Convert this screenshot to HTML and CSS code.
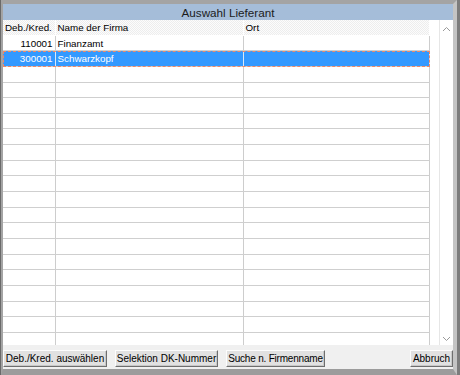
FILE: index.html
```html
<!DOCTYPE html>
<html lang="de">
<head>
    <meta charset="UTF-8">
    <title>Auswahl Lieferant</title>
    <link rel="stylesheet" href="styles.css">
</head>
<body>
    <div class="frame">
        <div class="window">
            <div class="title">Auswahl Lieferant</div>
            <div class="list">
                <div class="grid">
                    <div class="row head">
                        <div class="cell">Deb./Kred.</div>
                        <div class="cell">Name der Firma</div>
                        <div class="cell">Ort</div>
                    </div>
                    <div class="row">
                        <div class="cell num">110001</div>
                        <div class="cell">Finanzamt</div>
                        <div class="cell"></div>
                    </div>
                    <div class="row selected">
                        <div class="cell num">300001</div>
                        <div class="cell">Schwarzkopf</div>
                        <div class="cell"></div>
                    </div>
                    <div class="row"><div class="cell"></div><div class="cell"></div><div class="cell"></div></div>
                    <div class="row"><div class="cell"></div><div class="cell"></div><div class="cell"></div></div>
                    <div class="row"><div class="cell"></div><div class="cell"></div><div class="cell"></div></div>
                    <div class="row"><div class="cell"></div><div class="cell"></div><div class="cell"></div></div>
                    <div class="row"><div class="cell"></div><div class="cell"></div><div class="cell"></div></div>
                    <div class="row"><div class="cell"></div><div class="cell"></div><div class="cell"></div></div>
                    <div class="row"><div class="cell"></div><div class="cell"></div><div class="cell"></div></div>
                    <div class="row"><div class="cell"></div><div class="cell"></div><div class="cell"></div></div>
                    <div class="row"><div class="cell"></div><div class="cell"></div><div class="cell"></div></div>
                    <div class="row"><div class="cell"></div><div class="cell"></div><div class="cell"></div></div>
                    <div class="row"><div class="cell"></div><div class="cell"></div><div class="cell"></div></div>
                    <div class="row"><div class="cell"></div><div class="cell"></div><div class="cell"></div></div>
                    <div class="row"><div class="cell"></div><div class="cell"></div><div class="cell"></div></div>
                    <div class="row"><div class="cell"></div><div class="cell"></div><div class="cell"></div></div>
                    <div class="row"><div class="cell"></div><div class="cell"></div><div class="cell"></div></div>
                    <div class="row"><div class="cell"></div><div class="cell"></div><div class="cell"></div></div>
                    <div class="row"><div class="cell"></div><div class="cell"></div><div class="cell"></div></div>
                    <div class="row"><div class="cell"></div><div class="cell"></div><div class="cell"></div></div>
                    <div class="row"><div class="cell"></div><div class="cell"></div><div class="cell"></div></div>
                </div>
                <div class="scrollbar">
                    <svg width="9" height="6" viewBox="0 0 9 6"><polyline points="1,5 4.5,1.5 8,5" fill="none" stroke="#9a9a9a" stroke-width="1"/></svg>
                    <svg width="9" height="6" viewBox="0 0 9 6"><polyline points="1,1 4.5,4.5 8,1" fill="none" stroke="#9a9a9a" stroke-width="1"/></svg>
                </div>
            </div>
            <div class="buttons">
                <button class="btn b1">Deb./Kred. auswählen</button>
                <button class="btn b2">Selektion DK-Nummer</button>
                <button class="btn b3">Suche n. Firmenname</button>
                <button class="btn last">Abbruch</button>
            </div>
        </div>
    </div>
</body>
</html>
```
FILE: styles.css
```css
body {
    margin: 0;
    padding: 0;
    background-color: #9c9c9c;
    font-family: "Liberation Sans", Arial, sans-serif;
}
.frame {
    width: 460px;
    height: 375px;
    box-sizing: border-box;
    border-left: 1px solid #6a6a6a;
    border-right: 3px solid #7c7c7c;
}
.window {
    height: 100%;
    box-sizing: border-box;
    border-style: solid;
    border-width: 4px 4px 6px 2px;
    border-color: #a4a4a4 #c4c4c4 #9c9c9c #a4a4a4;
    background-color: #f0f0f0;
    display: flex;
    flex-direction: column;
}
.title {
    height: 16px;
    line-height: 17px;
    background-color: #a5bdd9;
    color: #1c1c1c;
    font-size: 11.7px;
    text-align: center;
}
.list {
    height: 325px;
    background: #fff;
    display: flex;
    overflow: hidden;
}
.grid {
    width: 427px;
    flex: none;
}
.row {
    display: grid;
    grid-template-columns: 52.5px 188px 186.5px;
    height: 15.65px;
    box-sizing: border-box;
    border-bottom: 1px solid #cfcfcf;
    font-size: 9.8px;
    line-height: 15px;
    color: #000;
}
.cell {
    border-right: 1px solid #cdcdcd;
    padding-left: 2px;
    white-space: nowrap;
    overflow: hidden;
}
.cell.num {
    text-align: right;
    padding-left: 0;
    padding-right: 2px;
}
.head {
    background: repeating-conic-gradient(#ededed 0 25%, #fcfcfc 0 50%) 0 0 / 2px 2px;
    border-bottom: 1px solid #fff;
    line-height: 16px;
}
.head .cell {
    border-right-color: #fff;
}
.selected {
    background-color: #3399ff;
    color: #fff;
    outline: 1px dashed #ee8866;
    outline-offset: -1px;
}
.selected .cell {
    border-right-color: #d8e8f8;
}
.scrollbar {
    margin-left: 9px;
    width: 14px;
    border-left: 1px solid #e6e6e6;
    display: flex;
    flex-direction: column;
    justify-content: space-between;
    align-items: center;
    padding: 6px 0 3px;
}
.buttons {
    flex: 1;
    display: flex;
    align-items: flex-start;
    padding-top: 5px;
}
.btn {
    height: 17px;
    margin: 0 8px 0 0;
    padding: 0;
    font-family: "Liberation Sans", Arial, sans-serif;
    font-size: 10px;
    color: #000;
    background-color: #e1e1e1;
    border: 1px solid;
    border-color: #fdfdfd #6e6e6e #6e6e6e #fdfdfd;
    box-shadow: inset -1px -1px 0 #c8c8c8;
    white-space: nowrap;
}
.b1 {
    width: 104px;
}
.b2 {
    width: 103px;
}
.b3 {
    width: 99px;
    letter-spacing: -0.2px;
}
.btn.last {
    width: 43px;
    margin-left: auto;
    margin-right: 0;
}
```
